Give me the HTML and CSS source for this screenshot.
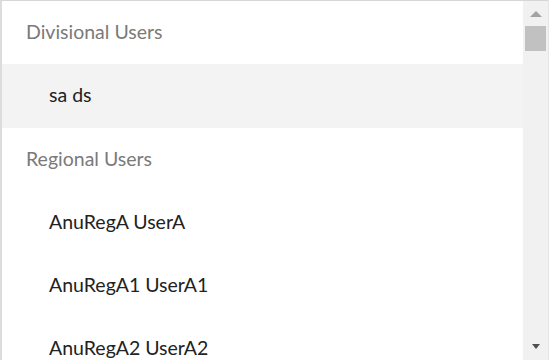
FILE: index.html
```html
<!DOCTYPE html>
<html>
<head>
  <title>User Picker</title>
  <link rel="stylesheet" href="styles.css">
</head>
<body>
  <div class="menu">
    <ul class="options">
      <li class="group">Divisional Users</li>
      <li class="item active">sa ds</li>
      <li class="group">Regional Users</li>
      <li class="item">AnuRegA UserA</li>
      <li class="item">AnuRegA1 UserA1</li>
      <li class="item">AnuRegA2 UserA2</li>
    </ul>
    <div class="scrollbar">
      <span class="arrow up"></span>
      <span class="thumb"></span>
      <span class="spacer"></span>
      <span class="arrow down"></span>
    </div>
  </div>
</body>
</html>
```

FILE: styles.css
```css
body { margin: 0; background: #fff; font-family: Lato, "Open Sans", sans-serif; }
.menu { display: flex; height: 359px; border-top: 1px solid #d6d6d6; border-left: 2px solid #dcdcdc; border-right: 1px solid #e4e4e4; box-shadow: 0 3px 3px rgba(0,0,0,0.4); overflow: hidden; background: #fff; }
.options { flex: 1; list-style: none; margin: 0; padding: 0; overflow: hidden; }
.options li { box-sizing: border-box; height: 63px; padding-bottom: 3px; display: flex; align-items: center; font-size: 19.5px; white-space: nowrap; }
.group { padding-left: 24px; color: #7a7a7a; }
.item { padding-left: 47px; color: #222; }
.item.active { background: #f3f3f3; height: 64px; }
.scrollbar { width: 25px; background: #f1f1f1; display: flex; flex-direction: column; align-items: center; }
.arrow { width: 0; height: 0; border-left: 6px solid transparent; border-right: 6px solid transparent; }
.arrow.up { margin-top: 10px; border-bottom: 6px solid #a3a3a3; }
.arrow.down { margin-bottom: 11px; border-left-width: 4px; border-right-width: 4px; border-top: 5px solid #505050; }
.thumb { width: 21px; height: 25px; background: #c1c1c1; margin-top: 9px; }
.spacer { flex: 1; }
```
